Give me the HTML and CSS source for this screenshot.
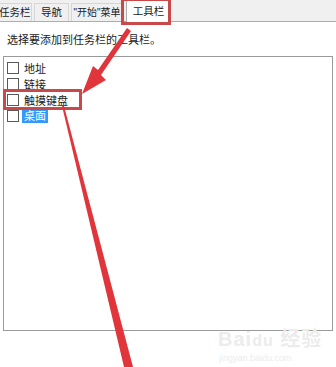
FILE: index.html
```html
<!DOCTYPE html>
<html lang="zh">
<head>
    <meta charset="UTF-8">
    <title>工具栏</title>
    <link rel="stylesheet" href="styles.css">
</head>
<body>
    <div class="tabs">
        <div class="tab t1">任务栏</div>
        <div class="tab t2">导航</div>
        <div class="tab t3">"开始"菜单</div>
        <div class="tab t4 active">工具栏</div>
    </div>

    <div class="panel">
        <p class="desc">选择要添加到任务栏的工具栏。</p>
        <div class="list">
            <div class="item"><span class="box"></span><span>地址</span></div>
            <div class="item"><span class="box"></span><span>链接</span></div>
            <div class="item"><span class="box"></span><span>触摸键盘</span></div>
            <div class="item"><span class="box"></span><span class="sel">桌面</span></div>
        </div>
    </div>

    <!-- 标注 -->
    <div class="mark mark-tab"></div>
    <div class="mark mark-item"></div>
    <svg class="arrows" width="336" height="367" viewBox="0 0 336 367">
        <polygon points="131,31 127,28 98,70 93,66 82,94 106,80 101,75" fill="#e0353a"/>
        <polygon points="62,106 64,106 133,367 124,367" fill="#e0353a"/>
    </svg>

    <div class="watermark">
        <div class="wm-big">Bai<span class="paw">du</span> 经验</div>
        <div class="wm-small">jingyan.baidu.com</div>
    </div>
</body>
</html>
```

FILE: styles.css
```css
body {
    margin: 0;
    width: 336px;
    height: 367px;
    overflow: hidden;
    background: #fff;
    font-family: "Liberation Sans", "Noto Sans CJK SC", sans-serif;
    font-size: 11px;
    color: #1a1a1a;
    position: relative;
}
.tabs {
    display: flex;
    align-items: flex-end;
    height: 21px;
    background: #f0f0f0;
    border-bottom: 1px solid #adadad;
}
.tab {
    height: 18px;
    line-height: 17px;
    margin-right: 2px;
    border: 1px solid #d6d6d6;
    border-bottom: none;
    background: #f0f0f0;
    box-sizing: border-box;
    text-align: center;
    white-space: nowrap;
    overflow: hidden;
    font-size: 10.5px;
}
.t1 {
    width: 33px;
    margin-left: -1px;
    border-left: none;
    text-align: right;
    padding-right: 3px;
}
.t2 {
    width: 35px;
}
.t3 {
    width: 52px;
    font-size: 10px;
}
.t4 {
    width: 45px;
}
.tab.active {
    height: 22px;
    line-height: 20px;
    margin-bottom: -1px;
    margin-left: 1px;
    background: #fff;
    border-color: #adadad;
}
.panel {
    padding: 0 3px;
}
.desc {
    margin: 0;
    padding: 10px 0 0 4px;
    height: 24px;
    line-height: 16px;
}
.list {
    height: 275px;
    border: 1px solid #9a9a9a;
    padding-top: 3px;
    box-sizing: border-box;
}
.item {
    display: flex;
    align-items: center;
    height: 16px;
    padding-left: 3px;
}
.box {
    width: 10px;
    height: 10px;
    border: 1px solid #5a5a5a;
    background: #fff;
    margin-right: 5px;
}
.sel {
    background: #3399ff;
    color: #fff;
    padding: 0 2px;
    margin-left: -2px;
    line-height: 14px;
}
.mark {
    position: absolute;
    border: 3px solid #c9484a;
    box-sizing: border-box;
}
.mark-tab {
    left: 121px;
    top: -2px;
    width: 50px;
    height: 27px;
}
.mark-item {
    left: 3px;
    top: 89px;
    width: 79px;
    height: 21px;
}
.arrows {
    position: absolute;
    left: 0;
    top: 0;
}
.watermark {
    position: absolute;
    left: 218px;
    top: 328px;
    color: #ececec;
    font-family: "Liberation Sans", "Noto Sans CJK SC", sans-serif;
}
.wm-big {
    font-size: 20px;
    font-weight: bold;
    line-height: 22px;
    letter-spacing: 1px;
}
.wm-big .paw {
    font-size: 16px;
}
.wm-small {
    font-size: 9px;
    line-height: 12px;
    padding-left: 1px;
}
```
